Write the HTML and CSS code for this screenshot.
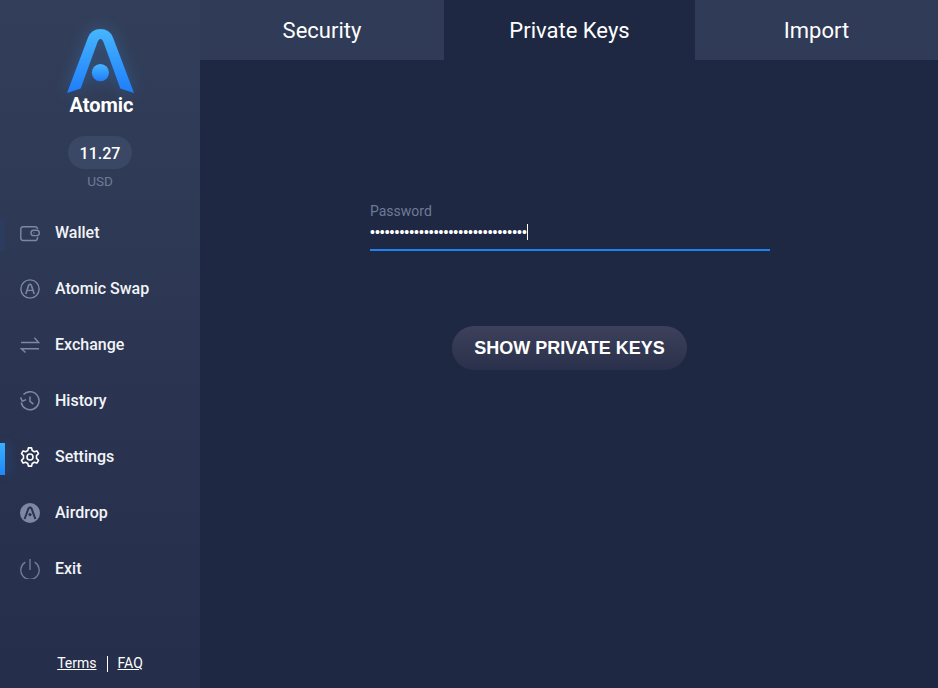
FILE: index.html
```html
<!DOCTYPE html>
<html lang="en">
<head>
<meta charset="utf-8">
<title>Atomic</title>
<link rel="stylesheet" href="styles.css">
</head>
<body>
<div class="app">
  <aside class="sidebar">
    <svg class="logo" width="80" height="75" viewBox="0 0 80 75">
      <defs>
        <linearGradient id="lg" x1="0" y1="0" x2="0" y2="1">
          <stop offset="0" stop-color="#46b6ff"/>
          <stop offset="1" stop-color="#1f7dfb"/>
        </linearGradient>
      </defs>
      <path fill="url(#lg)" d="M7 71 L28 15.5 Q31.2 7 40.5 7 Q49.8 7 53 15.5 L74 71 L60.3 66.5 L44 21.5 Q42.6 17 40.5 17 Q38.4 17 37 21.5 L20.7 66.5 Z"/>
      <circle cx="40.4" cy="50.6" r="8.6" fill="url(#lg)"/>
    </svg>
    <div class="brand">Atomic</div>
    <div class="balance">11.27</div>
    <div class="currency">USD</div>
    <nav class="nav">
      <a class="nav-item nav-item-hover">
        <svg class="icon" width="20" height="20" viewBox="0 0 20 20" fill="none" stroke="#7c88a6" stroke-width="1.4"><path d="M17.5 6V5.5A2.5 2.5 0 0 0 15 3.7H3.2A2.5 2.5 0 0 0 .8 6V15.3A2.5 2.5 0 0 0 3.2 17.5H15A2.5 2.5 0 0 0 17.5 15.3V14"/><rect x="11" y="7.2" width="8.3" height="5.4" rx="2.7"/><path d="M13.6 9.9H14.4"/></svg>
        <span>Wallet</span>
      </a>
      <a class="nav-item">
        <svg class="icon" width="20" height="20" viewBox="0 0 20 20" fill="none" stroke="#7c88a6"><circle cx="10" cy="10" r="9.1" stroke-width="1.4"/><path stroke-width="1.6" d="M5.8 15 L8.7 6.2 Q10 4.4 11.3 6.2 L14.2 15"/><path stroke-width="1.3" d="M7.4 11.4 L12.6 11.4"/></svg>
        <span>Atomic Swap</span>
      </a>
      <a class="nav-item">
        <svg class="icon" width="20" height="20" viewBox="0 0 20 20" fill="none" stroke="#7c88a6" stroke-width="1.4"><path d="M1 7.5H18.6L14.4 2.8"/><path d="M19 13.8H1.4L5.6 17.6"/></svg>
        <span>Exchange</span>
      </a>
      <a class="nav-item">
        <svg class="icon" width="20" height="20" viewBox="0 0 20 20" fill="none" stroke="#7c88a6" stroke-width="1.5"><path d="M3.5 3.5A9 9 0 1 1 1.2 11.5"/><path d="M.6 6.4L2.3 10.2L6.1 8.6"/><path d="M10 5.4V10.4L13.4 13.2"/></svg>
        <span>History</span>
      </a>
      <a class="nav-item nav-item-active">
        <svg class="icon" width="20" height="20" viewBox="0 0 20 20" fill="none" stroke="#ffffff" stroke-width="1.6" stroke-linejoin="round"><circle cx="10" cy="10" r="3"/><path d="M8.4 .9H11.6L12.2 3.5L14.3 4.7L16.9 3.9L18.5 6.7L16.5 8.6V11.4L18.5 13.3L16.9 16.1L14.3 15.3L12.2 16.5L11.6 19.1H8.4L7.8 16.5L5.7 15.3L3.1 16.1L1.5 13.3L3.5 11.4V8.6L1.5 6.7L3.1 3.9L5.7 4.7L7.8 3.5Z"/></svg>
        <span>Settings</span>
      </a>
      <a class="nav-item">
        <svg class="icon" width="20" height="20" viewBox="0 0 20 20"><circle cx="10" cy="10" r="10" fill="#7c88a6"/><path fill="none" stroke="#2a3350" stroke-width="2" d="M4.6 16 L8.5 5.4 Q10 3.4 11.5 5.4 L15.4 16"/><circle cx="10" cy="11.6" r="1.6" fill="#2a3350"/></svg>
        <span>Airdrop</span>
      </a>
      <a class="nav-item">
        <svg class="icon" width="20" height="20" viewBox="0 0 20 20" fill="none" stroke="#6f7b99" stroke-width="1.4"><path d="M5.4 3.2A9.2 9.2 0 1 0 14.6 3.2"/><path d="M10 0V11"/></svg>
        <span>Exit</span>
      </a>
    </nav>
    <div class="links">
      <a class="link">Terms</a>
      <span class="sep"></span>
      <a class="link">FAQ</a>
    </div>
  </aside>
  <main class="main">
    <div class="tabs">
      <div class="tab">Security</div>
      <div class="tab tab-active">Private Keys</div>
      <div class="tab">Import</div>
    </div>
    <form class="form">
      <label class="label">Password</label>
      <div class="field"><span class="dots">••••••••••••••••••••••••••••••••</span><span class="caret"></span></div>
      <div class="actions"><button class="btn" type="button">SHOW PRIVATE KEYS</button></div>
    </form>
  </main>
</div>
</body>
</html>
```
FILE: styles.css
```css
* { box-sizing: border-box; }
html, body { margin: 0; height: 100%; }
body {
  background: #1e2843;
  color: #fff;
  font-family: Roboto, "Liberation Sans", sans-serif;
  overflow: hidden;
}
.app { display: flex; width: 938px; height: 688px; }

.sidebar {
  width: 200px;
  flex: none;
  height: 688px;
  padding-top: 22px;
  display: flex;
  flex-direction: column;
  align-items: center;
  background: linear-gradient(180deg, #333f5a 0%, #2a3450 60%, #252e4a 100%);
}
.logo { display: block; overflow: visible; filter: drop-shadow(0 0 8px rgba(60, 160, 255, .28)); }
.brand { margin-top: -3px; font-size: 20px; line-height: 22px; font-weight: 700; padding-left: 3px; }
.balance {
  margin-top: 20px;
  width: 64px;
  height: 33px;
  border-radius: 17px;
  background: #3a4865;
  font-size: 16px;
  font-weight: 500;
  line-height: 35px;
  text-align: center;
}
.currency { margin-top: 5px; font-size: 13.5px; line-height: 15px; color: #6f7a94; }

.nav { width: 100%; margin-top: 16px; display: flex; flex-direction: column; }
.nav-item {
  position: relative;
  height: 56px;
  display: flex;
  align-items: center;
  padding-left: 20px;
  font-size: 16px;
  font-weight: 500;
  color: #f2f4f8;
}
.nav-item span { margin-left: 15px; position: relative; top: -1px; }
.icon { flex: none; display: block; }
.nav-item-hover::before,
.nav-item-active::before {
  content: "";
  position: absolute;
  left: 0;
  top: 14px;
  width: 5px;
  height: 32px;
}
.nav-item-hover::before { background: #2c3c5f; }
.nav-item-active::before {
  background: linear-gradient(180deg, #37b1ff, #1f86fb);
  box-shadow: 4px 0 10px rgba(40, 130, 250, .22);
}

.links {
  margin-top: auto;
  margin-bottom: 16px;
  display: flex;
  align-items: center;
  font-size: 14px;
  line-height: 17px;
}
.link { color: #fff; text-decoration: underline; }
.sep { width: 1px; height: 16px; margin: 0 10px; background: #fff; }

.main { flex: 1; min-width: 0; }
.tabs { display: grid; grid-template-columns: 244px 251px 243px; grid-template-rows: 60px; height: 60px; }
.tab {
  background: #303c57;
  font-size: 22px;
  padding-top: 1px;
  line-height: 59px;
  text-align: center;
}
.tab-active { background: #1e2843; }

.form { width: 400px; margin: 143px 0 0 170px; }
.label { display: block; font-size: 14px; line-height: 16px; color: #6f7a96; }
.field {
  margin-top: 3px;
  height: 29px;
  display: flex;
  align-items: center;
  border-bottom: 2px solid #1e82f0;
  padding-bottom: 8px;
}
.dots { font-family: "Liberation Sans", Arial, sans-serif; font-size: 14px; line-height: 18px; }
.caret { width: 1px; height: 16px; margin-left: 0; background: #fff; }
.actions { margin-top: 75px; display: flex; justify-content: center; padding-right: 1px; }
.btn {
  width: 235px;
  height: 44px;
  padding: 0;
  border: 0;
  border-radius: 22px;
  background: linear-gradient(180deg, #3d415b 0%, #2a304b 100%);
  color: #fff;
  font-family: "Liberation Sans", Arial, sans-serif;
  font-size: 18px;
  font-weight: 700;
}
```
